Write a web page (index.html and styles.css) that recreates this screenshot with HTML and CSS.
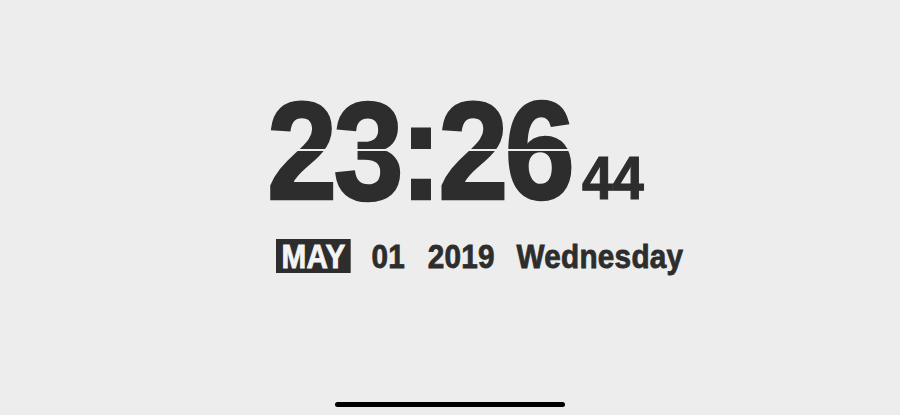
FILE: index.html
```html
<!DOCTYPE html>
<html>
<head>
<meta charset="utf-8">
<link rel="stylesheet" href="styles.css">
</head>
<body>
<div class="screen">
  <div class="clock">
    <div class="time-row">
      <div class="time">23:26<span class="split"></span></div>
      <div class="seconds">44</div>
    </div>
    <div class="date-row">
      <span class="month">MAY</span>
      <span class="day">01</span>
      <span class="year">2019</span>
      <span class="weekday">Wednesday</span>
    </div>
  </div>
  <div class="home-indicator"></div>
</div>
</body>
</html>
```

FILE: styles.css
```css
html, body {
  margin: 0;
  padding: 0;
  background: #ededed;
}
.screen {
  width: 900px;
  height: 415px;
  position: relative;
  overflow: hidden;
  font-family: "Liberation Sans", Arial, sans-serif;
  font-weight: bold;
  color: #2d2d2d;
  padding-top: 81px;
  padding-left: 267px;
  box-sizing: border-box;
}
.clock {
  display: flex;
  flex-direction: column;
  align-items: flex-start;
  transform: scaleX(0.9);
  transform-origin: left top;
}
.time-row {
  display: flex;
  align-items: baseline;
  gap: 12px;
}
.time {
  position: relative;
  font-size: 140px;
  line-height: 1;
  letter-spacing: -4px;
  -webkit-text-stroke: 2.5px #2d2d2d;
}
.split {
  position: absolute;
  left: 0;
  right: 0;
  top: 68px;
  height: 2px;
  background: #ededed;
}
.seconds {
  font-size: 62px;
  line-height: 1;
  letter-spacing: -0.5px;
  -webkit-text-stroke: 1.2px #2d2d2d;
}
.date-row {
  display: flex;
  align-items: center;
  margin-top: 18px;
  margin-left: 10px;
  font-size: 33px;
  line-height: 1;
  -webkit-text-stroke: 0.8px #2d2d2d;
  letter-spacing: 0.3px;
}
.month {
  background: #2d2d2d;
  color: #f4f4f4;
  -webkit-text-stroke: 0.8px #f4f4f4;
  padding: 1px 6px 0;
}
.day {
  margin-left: 23px;
}
.year {
  margin-left: 25px;
}
.weekday {
  margin-left: 24px;
}
.home-indicator {
  position: absolute;
  left: 335px;
  bottom: 8px;
  width: 230px;
  height: 5px;
  border-radius: 3px;
  background: #000;
}
```
